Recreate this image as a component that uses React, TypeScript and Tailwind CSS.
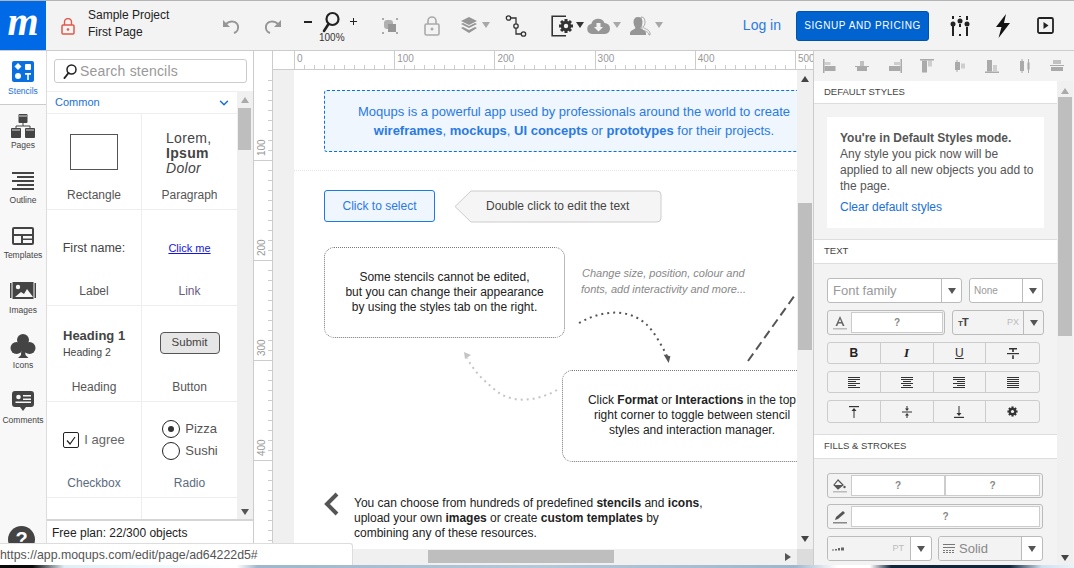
import { ReactNode } from "react";
import { ChevronDown } from "lucide-react";

const GREY = "#969696";
const DARK = "#3c3c3c";

function Caret({ color = "#8c8c8c", className = "" }: { color?: string; className?: string }) {
    return (
        <svg width="8" height="6" viewBox="0 0 8 6" className={className}>
            <path d="M0 0h8L4 6z" fill={color} />
        </svg>
    );
}

function Cog() {
    const teeth = [0, 45, 90, 135];
    return (
        <g>
            {teeth.map((a) => (
                <rect key={a} x="13.5" y="4" width="3" height="14" fill="#333" transform={`rotate(${a} 15 11)`} />
            ))}
            <circle cx="15" cy="11" r="5.2" fill="#333" />
            <circle cx="15" cy="11" r="2.2" fill="#f3f3f3" />
        </g>
    );
}

function HeaderIcons() {
    return (
        <div className="flex items-center h-full">
            {/* undo */}
            <svg width="20" height="20" viewBox="0 0 20 20" className="ml-[34px]" fill="none">
                <path d="M5 8c4-4 11-3 12 2 .6 3-1 6-4 7" stroke={GREY} strokeWidth="2" />
                <path d="M2 4v7h7z" fill={GREY} />
            </svg>
            {/* redo */}
            <svg width="20" height="20" viewBox="0 0 20 20" className="ml-[22px]" fill="none">
                <path d="M15 8c-4-4-11-3-12 2-.6 3 1 6 4 7" stroke={GREY} strokeWidth="2" />
                <path d="M18 4v7h-7z" fill={GREY} />
            </svg>
            {/* zoom */}
            <div className="relative ml-[21px] w-[60px] h-full">
                <span className="absolute left-0 top-[20px] w-[8px] h-[1.5px] bg-[#222]" />
                <svg width="20" height="24" viewBox="0 0 20 24" className="absolute left-[17px] top-[10px]" fill="none">
                    <circle cx="11.5" cy="8" r="6" stroke="#222" strokeWidth="2.2" />
                    <path d="M7.5 13 3 20" stroke="#222" strokeWidth="2.6" strokeLinecap="round" />
                </svg>
                <span className="absolute left-[46px] top-[20px] w-[7px] h-[1.2px] bg-[#222]" />
                <span className="absolute left-[49px] top-[17px] w-[1.2px] h-[7px] bg-[#222]" />
                <span className="absolute left-[15px] top-[31px] text-[10px] leading-[12px] text-[#333]">100%</span>
            </div>
            {/* group */}
            <svg width="18" height="18" viewBox="0 0 18 18" className="ml-[17px]">
                <path d="M1 1h2v2H1zM15 1h2v2h-2zM1 15h2v2H1zM15 15h2v2h-2z" fill="#aaa" />
                <rect x="3" y="3" width="9" height="9" rx="3" fill="#b0b0b0" />
                <rect x="7" y="7" width="8" height="8" fill={GREY} />
            </svg>
            {/* lock */}
            <svg width="16" height="20" viewBox="0 0 16 20" className="ml-[25px]" fill="none">
                <path d="M4 8V5a4 4 0 0 1 8 0v3" stroke="#aaa" strokeWidth="1.6" />
                <rect x="1" y="8" width="14" height="11" rx="1.5" stroke="#aaa" strokeWidth="1.6" />
                <circle cx="8" cy="13" r="1.5" fill="#aaa" />
            </svg>
            {/* layers */}
            <svg width="18" height="18" viewBox="0 0 18 18" className="ml-[20px]">
                <path d="M9 0l8 4-8 4-8-4z" fill={GREY} />
                <path d="M1 7l2-1 6 3 6-3 2 1-8 4zM1 11l2-1 6 3 6-3 2 1-8 5z" fill={GREY} />
            </svg>
            <Caret className="ml-[4px] -mt-[1px]" color="#a8a8a8" />
            {/* connector */}
            <svg width="22" height="24" viewBox="0 0 22 24" className="ml-[15px]" fill="none" stroke="#333" strokeWidth="1.3">
                <circle cx="3.5" cy="4" r="2.2" />
                <circle cx="11" cy="12" r="2.2" />
                <circle cx="18.5" cy="20" r="2.2" />
                <path d="M5.7 4H11v5.8M11 14.2V20h5.3" />
            </svg>
            {/* format */}
            <svg width="24" height="22" viewBox="0 0 24 22" className="ml-[24px]" fill="none">
                <path d="M15 1.2H1.2v19.6H15" stroke="#333" strokeWidth="1.6" />
                <Cog />
            </svg>
            <Caret className="ml-[1px] -mt-[1px]" color="#333" />
            {/* cloud */}
            <svg width="23" height="16" viewBox="0 0 23 16" className="ml-[3px]">
                <path d="M5 16a5 5 0 0 1-.7-9.9A7 7 0 0 1 17.5 5 5.5 5.5 0 0 1 17.5 16z" fill={GREY} />
                <path d="M9.5 5h4v4h2.5l-4.5 4.5L7 9h2.5z" fill="#f3f3f3" />
            </svg>
            <Caret className="ml-[3px] -mt-[1px]" color="#a8a8a8" />
            {/* users */}
            <svg width="21" height="20" viewBox="0 0 21 20" className="ml-[9px]">
                <path d="M11 1c3 0 4 2 4 5s-1 4-2 5c1 2 6 2 7 6v2h-1c0-3-4-4-7-5z" fill="none" stroke="#aaa" />
                <path d="M8 1c3 0 4.500 2 4.500 5S11 11 10.500 12c1 1.500 5 2 5.500 5v2H0v-2c.5-3 4.500-3.500 5.500-5C5 11 3.500 9 3.500 6S5 1 8 1z" fill={GREY} />
            </svg>
            <Caret className="ml-[4px] -mt-[1px]" color="#a8a8a8" />
        </div>
    );
}

function Header() {
    return (
        <header className="flex h-[50px] shrink-0 bg-[#f3f3f3] border-b border-[#cccccc]">
            <div className="w-[46px] h-full bg-[#006ae6] flex items-center justify-center text-white text-[40px] italic font-bold leading-none pb-[8px] font-['Liberation_Serif',serif]">
                m
            </div>
            <svg width="14" height="17" viewBox="0 0 14 17" className="ml-[15px] mt-[17px]" fill="none">
                <path d="M3.500 7V4a3.500 3.500 0 0 1 7 0v3" stroke="#e0594a" strokeWidth="1.400" />
                <rect x="1" y="7" width="12" height="9" rx="1" stroke="#e0594a" strokeWidth="1.500" />
                <circle cx="7" cy="11.500" r="1.300" fill="#e0594a" />
            </svg>
            <div className="ml-[13px] pt-[6px] text-[12px] leading-[17px] text-[#222] w-[99px]">
                <div>Sample Project</div>
                <div>First Page</div>
            </div>
            <div className="flex-1 min-w-0 h-[49px]">
                <HeaderIcons />
            </div>
            <span className="text-[14px] text-[#2a7ae2] self-center mr-[15px]">Log in</span>
            <div className="self-center w-[133px] h-[30px] rounded-[3px] bg-[#0063cf] border border-[#0052ab] flex items-center justify-center text-white text-[10px] tracking-[0.6px] font-medium">
                SIGNUP AND PRICING
            </div>
            {/* sliders */}
            <svg width="20" height="22" viewBox="0 0 20 22" className="ml-[21px] self-center" stroke="#222" strokeWidth="2" fill="#222">
                <path d="M3 1v3M3 11v10M10 1v1M10 9v3M10 19v2M17 1v4M17 12v9" fill="none" />
                <circle cx="3" cy="9" r="2.500" stroke="none" />
                <circle cx="10" cy="6" r="2.500" stroke="none" />
                <circle cx="17" cy="9" r="2.500" stroke="none" />
            </svg>
            <svg width="16" height="24" viewBox="0 0 16 24" className="ml-[25px] self-center">
                <path d="M11 0 1 13h5.500L3.500 24 15 9H9z" fill="#111" />
            </svg>
            <svg width="17" height="17" viewBox="0 0 17 17" className="ml-[26px] mr-[20px] self-center" fill="none">
                <rect x="1" y="1" width="15" height="15" rx="1.500" stroke="#222" strokeWidth="1.800" />
                <path d="M6.500 5v7l5-3.500z" fill="#222" />
            </svg>
        </header>
    );
}

function NavItem({ label, icon, active }: { label: string; icon: ReactNode; active?: boolean }) {
    return (
        <div
            className={
                active
                    ? "h-[54px] bg-white border-b border-[#ccc] flex flex-col items-center pt-[9px] text-[#1a6fd8]"
                    : "h-[55px] flex flex-col items-center pt-[9px] text-[#444]"
            }
        >
            <div className="h-[23px] flex items-center justify-center">{icon}</div>
            <span className="text-[8.5px] leading-[11px] mt-[3px] whitespace-nowrap">{label}</span>
        </div>
    );
}

function LeftNav() {
    const stroke = "#444";
    return (
        <nav className="w-[47px] shrink-0 bg-[#f8f8f8] border-r border-[#ddd] relative">
            <NavItem
                active
                label="Stencils"
                icon={
                    <svg width="22" height="21" viewBox="0 0 22 21">
                        <rect width="22" height="21" rx="2" fill="#0a6fe0" />
                        <path d="M6 2l3.500 3.500L6 9 2.500 5.500z" fill="#fff" />
                        <rect x="13" y="3" width="6" height="6" rx="1" fill="#fff" />
                        <circle cx="6" cy="15" r="3" fill="#fff" />
                        <path d="M13 12h6v1.800h-2.200V19h-1.600v-5.200H13z" fill="#fff" />
                    </svg>
                }
            />
            <NavItem
                label="Pages"
                icon={
                    <svg width="24" height="24" viewBox="0 0 24 24" fill={stroke}>
                        <rect x="7.500" y="0" width="9" height="9" rx="1" />
                        <rect x="0" y="14" width="10" height="10" rx="1" />
                        <rect x="14" y="14" width="10" height="10" rx="1" />
                        <path d="M12 9v3M5 14v-2h14v2" stroke={stroke} fill="none" />
                        <path d="M8 2h8M1 16h8M15 16h8" stroke="#ddd" />
                    </svg>
                }
            />
            <NavItem
                label="Outline"
                icon={
                    <svg width="22" height="18" viewBox="0 0 22 18" fill={stroke}>
                        <rect width="22" height="2" />
                        <rect x="5" y="4" width="17" height="2" />
                        <rect y="8" width="22" height="2" />
                        <rect x="5" y="12" width="17" height="2" />
                        <rect y="16" width="22" height="2" />
                    </svg>
                }
            />
            <NavItem
                label="Templates"
                icon={
                    <svg width="22" height="18" viewBox="0 0 22 18">
                        <rect width="22" height="18" rx="2" fill={stroke} />
                        <rect x="2" y="2" width="18" height="5" fill="#f8f8f8" />
                        <rect x="2" y="9" width="7" height="7" fill="#f8f8f8" />
                        <rect x="11" y="9" width="9" height="2.500" fill="#f8f8f8" />
                        <rect x="11" y="13" width="9" height="3" fill="#f8f8f8" />
                    </svg>
                }
            />
            <NavItem
                label="Images"
                icon={
                    <svg width="26" height="18" viewBox="0 0 26 18">
                        <rect x="0" y="1" width="1.500" height="15" fill={stroke} />
                        <rect x="24.500" y="1" width="1.500" height="15" fill={stroke} />
                        <rect x="2.500" y="0" width="21" height="17" fill={stroke} />
                        <circle cx="8" cy="5" r="2.200" fill="#f8f8f8" />
                        <path d="M5 15l6-5 3 2 3-5 6 8z" fill="#f8f8f8" />
                    </svg>
                }
            />
            <NavItem
                label="Icons"
                icon={
                    <svg width="26" height="26" viewBox="0 0 26 26" fill={stroke}>
                        <circle cx="13" cy="7" r="6" />
                        <circle cx="6.500" cy="15" r="6" />
                        <circle cx="19.500" cy="15" r="6" />
                        <path d="M11.500 12h3l1 10 3 3H8l3-3z" />
                    </svg>
                }
            />
            <NavItem
                label="Comments"
                icon={
                    <svg width="22" height="20" viewBox="0 0 22 20">
                        <path d="M3 0h16a3 3 0 0 1 3 3v10a3 3 0 0 1-3 3h-5l-3 4-3-4H3a3 3 0 0 1-3-3V3a3 3 0 0 1 3-3z" fill={stroke} />
                        <circle cx="6.500" cy="6" r="2.300" fill="#f8f8f8" />
                        <path d="M11 4h8v1.500h-8zM11 7.500h8V9h-8zM3.500 10.500h15.500V12H3.500z" fill="#f8f8f8" />
                    </svg>
                }
            />
            {/* help button, the browser status bubble covers its lower half */}
            <div className="absolute left-[8px] top-[475px] w-[27px] h-[27px] rounded-full bg-[#444] text-white text-[20px] font-bold leading-[27px] text-center">?</div>
        </nav>
    );
}

function Cell({ label, children, labelTone = "#555" }: { label: string; children: ReactNode; labelTone?: string }) {
    return (
        <div className="h-[96px] border-b border-[#eeeeee] flex flex-col items-center">
            <div className="h-[71px] w-full flex items-center justify-center pt-[5px]">{children}</div>
            <span className="text-[12px] leading-[14px] mt-[3px]" style={{ color: labelTone }}>
                {label}
            </span>
        </div>
    );
}

function StencilPanel() {
    return (
        <aside className="w-[207px] shrink-0 bg-white border-r border-[#ccc] flex flex-col relative">
            <div className="h-[40px] shrink-0 flex items-start pt-[8px] pl-[7px]">
                <div className="w-[193px] h-[24px] rounded-[3px] border border-[#ccc] flex items-center pl-[8px]">
                    <svg width="14" height="15" viewBox="0 0 14 15" fill="none">
                        <circle cx="8.500" cy="5.500" r="4.500" stroke="#222" strokeWidth="1.500" />
                        <path d="M5.500 9 1.500 14" stroke="#222" strokeWidth="2" strokeLinecap="round" />
                    </svg>
                    <span className="ml-[3px] text-[14px] text-[#999] tracking-[0.2px]">Search stencils</span>
                </div>
            </div>
            <div className="flex flex-1 min-h-0">
                <div className="w-[190px] shrink-0 overflow-hidden">
                    <div className="h-[23px] border-t border-b border-[#eeeeee] flex items-center justify-between pl-[8px] pr-[6px] text-[11px] text-[#1a6fd8]">
                        <span>Common</span>
                        <ChevronDown size={14} strokeWidth={2.5} color="#1a6fd8" />
                    </div>
                    <div className="grid grid-cols-[95px_95px]">
                        <div className="border-r border-[#eeeeee]">
                            <Cell label="Rectangle">
                                <div className="w-[48px] h-[36px] border border-[#555]" />
                            </Cell>
                            <Cell label="Label">
                                <span className="text-[12.5px] text-[#444]">First name:</span>
                            </Cell>
                            <Cell label="Heading">
                                <div className="w-[62px] text-[#444] whitespace-nowrap">
                                    <div className="text-[13px] font-bold leading-[16px]">Heading 1</div>
                                    <div className="text-[10.5px] leading-[16px]">Heading 2</div>
                                </div>
                            </Cell>
                            <Cell label="Checkbox" labelTone="#5b6b80">
                                <div className="flex items-center gap-[5px]">
                                    <div className="w-[16px] h-[16px] rounded-[2px] border border-[#222] flex items-center justify-center">
                                        <svg width="10" height="9" viewBox="0 0 10 9" fill="none">
                                            <path d="M1 4.500 4 8l5-7" stroke="#222" strokeWidth="1.200" />
                                        </svg>
                                    </div>
                                    <span className="text-[13px] text-[#666]">I agree</span>
                                </div>
                            </Cell>
                            <div className="h-[30px]" />
                        </div>
                        <div>
                            <Cell label="Paragraph">
                                <div className="w-[47px] mt-[2px] text-[14px] leading-[15px] text-[#444] tracking-[0.3px]">
                                    <div>Lorem,</div>
                                    <div className="font-bold">Ipsum</div>
                                    <div className="italic">Dolor</div>
                                </div>
                            </Cell>
                            <Cell label="Link" labelTone="#6c5a80">
                                <span className="text-[11px] text-[#1414e6] underline">Click me</span>
                            </Cell>
                            <Cell label="Button">
                                <div className="w-[60px] h-[22px] -mt-[2px] rounded-[4px] border border-[#555] bg-[#e6e6e6] text-[#444] text-[11.5px] leading-[19px] text-center">
                                    Submit
                                </div>
                            </Cell>
                            <Cell label="Radio" labelTone="#5b6b80">
                                <div className="text-[13px] text-[#555] ml-[1px]">
                                    <div className="flex items-center gap-[5px] h-[22px]">
                                        <span className="w-[18px] h-[18px] rounded-full border border-[#222] flex items-center justify-center">
                                            <span className="w-[6px] h-[6px] rounded-full bg-[#333]" />
                                        </span>
                                        Pizza
                                    </div>
                                    <div className="flex items-center gap-[5px] h-[22px]">
                                        <span className="w-[18px] h-[18px] rounded-full border border-[#222]" />
                                        Sushi
                                    </div>
                                </div>
                            </Cell>
                            <div className="h-[30px] flex justify-center items-end">
                                <div className="w-[60px] h-[1px] bg-[#777]" />
                            </div>
                        </div>
                    </div>
                </div>
                <div className="w-[16px] bg-[#f0f0f0] flex flex-col items-center justify-between pt-[6px] pb-[5px] h-[429px] relative">
                    <Caret color="#aaa" className="rotate-180" />
                    <div className="absolute left-[1px] top-[17px] w-[13px] h-[42px] bg-[#bebebe]" />
                    <Caret color="#555" />
                </div>
            </div>
            <div className="absolute left-0 top-[468px] w-full h-[46px] bg-white border-t-2 border-[#d5d5d5] pl-[5px] pt-[5px] text-[12px] leading-[14px] text-[#222]">
                Free plan: 22/300 objects
                <div className="absolute left-[132px] top-[22px] w-[53px] h-[20px] rounded-t-[3px] bg-[#0056b3]" />
            </div>
        </aside>
    );
}

function Rulers() {
    const hTicks = Array.from({ length: 52 }, (_, i) => i);
    const vTicks = Array.from({ length: 48 }, (_, i) => i);
    return (
        <>
            {/* horizontal ruler */}
            <svg width="559" height="19" className="absolute left-0 top-0 bg-white">
                <rect x="0" y="18" width="559" height="1" fill="#ccc" />
                <rect x="18" y="0" width="1" height="19" fill="#ccc" />
                {hTicks.map((i) => {
                    const x = 40 + i * 10.02;
                    const major = i % 10 === 0;
                    return <rect key={i} x={Math.round(x)} y={major ? 0 : 14} width="1" height={major ? 18 : 4} fill="#ccc" />;
                })}
                {[0, 100, 200, 300, 400, 500].map((n, i) => (
                    <text key={n} x={43 + i * 100.2} y="11" fontSize="10" fill="#999" fontFamily="Liberation Sans">
                        {n}
                    </text>
                ))}
            </svg>
            {/* vertical ruler */}
            <svg width="19" height="480" className="absolute left-0 top-[18px] bg-white">
                <rect x="18" y="0" width="1" height="480" fill="#ccc" />
                {vTicks.map((i) => {
                    const y = 11 + i * 10;
                    const major = i % 10 === 8;
                    return <rect key={i} x={major ? 0 : 14} y={y} width={major ? 18 : 4} height="1" fill="#ccc" />;
                })}
                {[100, 200, 300, 400].map((n, i) => (
                    <text key={n} x="0" y="0" fontSize="10" fill="#999" fontFamily="Liberation Sans" transform={`translate(11 ${87 + i * 100}) rotate(-90)`}>
                        {n}
                    </text>
                ))}
            </svg>
        </>
    );
}

function Canvas() {
    return (
        <main className="w-[543px] h-[498px] shrink-0 relative overflow-hidden bg-white">
            <div className="absolute left-[19px] top-[19px] w-[21px] h-[480px] bg-[#f0f0f0]" />

            <div className="absolute left-[70px] top-[39px] w-[500px] h-[62px] rounded-[3px] border border-dashed border-[#0a6fe0] bg-[#eff6fe] pt-[11px] text-center text-[13px] leading-[19px] text-[#2a7ae2]">
                <div>Moqups is a powerful app used by professionals around the world to create</div>
                <div>
                    <b>wireframes</b>, <b>mockups</b>, <b>UI concepts</b> or <b>prototypes</b> for their projects.
                </div>
            </div>
            <div className="absolute left-[40px] top-[119px] w-[503px] border-t border-dotted border-[#e5e5e5]" />

            <div className="absolute left-[70px] top-[139px] w-[111px] h-[32px] rounded-[3px] border border-[#1a7ae6] bg-[#eff6fe] text-[12px] leading-[30px] text-center text-[#2a7ae2]">
                Click to select
            </div>
            <svg width="208" height="33" viewBox="0 0 208 33" className="absolute left-[200px] top-[139px]">
                <path d="M1 16.500 17 1h186a4 4 0 0 1 4 4v23a4 4 0 0 1-4 4H17z" fill="#f5f5f5" stroke="#ccc" />
            </svg>
            <span className="absolute left-[232px] top-[148px] text-[12px] leading-[14px] text-[#444]">Double click to edit the text</span>

            <div className="absolute left-[70px] top-[196px] w-[241px] h-[91px] rounded-[10px] border border-dotted border-[#777] pt-[22px] text-center text-[12px] leading-[15px] text-[#222]">
                <div>Some stencils cannot be edited,</div>
                <div>but you can change their appearance</div>
                <div>by using the styles tab on the right.</div>
            </div>

            <div className="absolute left-[327px] top-[214px] w-[170px] text-[11px] leading-[16px] italic text-[#888]">
                <div className="pl-[1px]">Change size, position, colour and</div>
                <div>fonts, add interactivity and more...</div>
            </div>

            <svg width="543" height="515" className="absolute left-0 top-0">
                <path d="M325 272C350 258 375 258 392 273 C400 280 408 295 414 307" fill="none" stroke="#555" strokeWidth="2" strokeDasharray="2 4" />
                <path d="M409 304l7 0.500-0.500 7z" fill="#555" transform="rotate(10 412 307)" />
                <path d="M494 310 541 244" fill="none" stroke="#555" strokeWidth="2" strokeDasharray="9 5" />
                <path d="M303 339C280 352 255 352 240 338 C228 328 220 320 213 307" fill="none" stroke="#c4c4c4" strokeWidth="2" strokeDasharray="2 4" />
                <path d="M210 301l7 3-6 4z" fill="#c4c4c4" />
                <path d="M83 443l-10 10 10 10" fill="none" stroke="#555" strokeWidth="4" />
            </svg>

            <div className="absolute left-[308px] top-[319px] w-[300px] h-[92px] rounded-[10px] border border-dotted border-[#777] pt-[22px] text-[12px] leading-[15px] text-[#222]">
                <div className="w-[258px] text-center">
                    <div className="whitespace-nowrap">
                        Click <b>Format</b> or <b>Interactions</b> in the top
                    </div>
                    <div>right corner to toggle between stencil</div>
                    <div>styles and interaction manager.</div>
                </div>
            </div>

            <div className="absolute left-[100px] top-[445px] w-[380px] text-[12px] leading-[15px] text-[#222]">
                <div>
                    You can choose from hundreds of predefined <b>stencils</b> and <b>icons</b>,
                </div>
                <div>
                    upload your own <b>images</b> or create <b>custom templates</b> by
                </div>
                <div>combining any of these resources.</div>
            </div>
        </main>
    );
}

function CanvasScrollbars() {
    return (
        <>
            <div className="absolute left-[254px] top-[498px] w-[543px] h-[16px] bg-[#f0f0f0]">
                <div className="absolute left-[174px] top-[1px] w-[186px] h-[13px] bg-[#bebebe]" />
                <Caret color="#555" className="absolute left-[530px] top-[5px] -rotate-90" />
            </div>
            <div className="absolute left-[797px] top-[498px] w-[16px] h-[16px] bg-[#dcdcdc]" />
        </>
    );
}

function VScroll() {
    return (
        <div className="w-[16px] shrink-0 h-[498px] bg-[#f0f0f0] flex flex-col items-center justify-between pt-[25px] pb-[7px] relative">
            <Caret color="#444" className="rotate-180" />
            <div className="absolute left-[1px] top-[152px] w-[14px] h-[147px] bg-[#bebebe]" />
            <Caret color="#444" />
        </div>
    );
}

function SectionTitle({ children, tall }: { children: ReactNode; tall?: boolean }) {
    return (
        <div className={`bg-white border-b border-[#ddd] pl-[10px] text-[9.5px] text-[#444] flex items-center shrink-0 ${tall ? "h-[23px]" : "h-[24px]"}`}>
            {children}
        </div>
    );
}

function Dropdown({ w, divider, children }: { w: number; divider: number; children: ReactNode }) {
    return (
        <div className="h-[25px] rounded-[3px] border border-[#bbb] bg-white flex items-stretch overflow-hidden" style={{ width: w }}>
            <div className="flex-1 min-w-0 flex items-center">{children}</div>
            <div className="border-l border-[#bbb] flex items-center justify-center" style={{ width: divider }}>
                <Caret color="#555" />
            </div>
        </div>
    );
}

function Swatch({ icon, w, fields }: { icon: ReactNode; w: number; fields: number[] }) {
    return (
        <div className="h-[25px] rounded-[3px] border border-[#bbb] bg-[#f3f3f3] flex items-center" style={{ width: w }}>
            <div className="w-[23px] flex justify-center">{icon}</div>
            {fields.map((fw, i) => (
                <div key={i} className="h-[21px] bg-white border border-[#ccc] text-center text-[10px] leading-[19px] text-[#888] font-bold" style={{ width: fw }}>
                    ?
                </div>
            ))}
        </div>
    );
}

function BtnRow({ items, h }: { items: ReactNode[]; h: string }) {
    return (
        <div className={`grid grid-cols-4 w-[213px] rounded-[3px] border border-[#ccc] ${h}`}>
            {items.map((it, i) => (
                <div key={i} className={`flex items-center justify-center ${i < 3 ? "border-r border-[#ccc]" : ""}`}>
                    {it}
                </div>
            ))}
        </div>
    );
}

function AlignLines({ mode }: { mode: "left" | "center" | "right" | "full" }) {
    const short = mode === "left" ? "M0 4.500h8M0 8.500h8" : mode === "right" ? "M4 4.500h8M4 8.500h8" : mode === "center" ? "M2 4.500h8M2 8.500h8" : "M0 4.500h12M0 8.500h12";
    return (
        <svg width="12" height="11" viewBox="0 0 12 11" fill="none" stroke="#333" strokeWidth="1.200">
            <path d={`M0 .5h12M0 2.500h12M0 6.500h12M0 10.500h12${short}`} />
        </svg>
    );
}

function RightToolbarIcons() {
    const c = "#aaaaaa";
    return (
        <div className="h-[30px] shrink-0 flex items-center justify-between pl-[9px] pr-[10px]">
            <svg width="14" height="14" viewBox="0 0 14 14" fill={c}><rect width="1.500" height="14" /><rect x="1.500" y="7" width="11" height="5" /><rect x="1.500" y="3" width="6" height="3" opacity="0.500" /></svg>
            <svg width="14" height="14" viewBox="0 0 14 14" fill={c}><rect y="7" width="14" height="1" /><rect x="2" y="8" width="10" height="4" /><rect x="5" y="2" width="4" height="5" opacity="0.700" /></svg>
            <svg width="14" height="14" viewBox="0 0 14 14" fill={c}><rect x="12.500" width="1.500" height="14" /><rect x="1" y="7" width="11.500" height="5" /><rect x="6" y="3" width="6" height="3" opacity="0.500" /></svg>
            <svg width="14" height="14" viewBox="0 0 14 14" fill={c}><rect width="14" height="1.500" /><rect x="2" y="1.500" width="5" height="12" /><rect x="8" y="1.500" width="4" height="6" opacity="0.500" /></svg>
            <svg width="14" height="14" viewBox="0 0 14 14" fill={c}><rect x="2" y="3" width="5" height="8" /><rect x="3.500" y="1" width="1" height="12" /><rect x="8" y="4.500" width="4" height="5" opacity="0.500" /></svg>
            <svg width="14" height="14" viewBox="0 0 14 14" fill={c}><rect y="12.500" width="14" height="1.500" /><rect x="2" y="1" width="5" height="11.500" /><rect x="8" y="6" width="4" height="6" opacity="0.500" /></svg>
            <svg width="14" height="14" viewBox="0 0 14 14" fill={c}><rect x="2" y="2" width="4" height="10" /><rect x="9" y="3.500" width="3" height="7" opacity="0.600" /><rect x="3.500" y="0" width="1" height="14" /><rect x="10" y="0" width="1" height="14" /></svg>
            <svg width="14" height="14" viewBox="0 0 14 14" fill={c}><rect x="3" y="1" width="8" height="4" opacity="0.700" /><rect x="1" y="8" width="12" height="4" /><rect y="6" width="14" height="1" /></svg>
        </div>
    );
}

function RightPanel() {
    return (
        <aside className="w-[261px] shrink-0 bg-[#f3f3f3] border-l border-[#ccc] flex flex-col">
            <RightToolbarIcons />
            <div className="flex flex-1 min-h-0">
                <div className="w-[243px] shrink-0 flex flex-col overflow-hidden">
                    <SectionTitle tall>DEFAULT STYLES</SectionTitle>
                    <div className="h-[136px] shrink-0 px-[13px] pt-[13px] border-b border-[#ddd]">
                        <div className="bg-white h-[111px] pl-[13px] pt-[13px] text-[12px] leading-[16px] text-[#555]">
                            <div className="font-bold">You're in Default Styles mode.</div>
                            <div>Any style you pick now will be</div>
                            <div>applied to all new objects you add to</div>
                            <div>the page.</div>
                            <div className="mt-[5px] text-[#1a6fd8]">Clear default styles</div>
                        </div>
                    </div>
                    <SectionTitle>TEXT</SectionTitle>
                    <div className="h-[171px] shrink-0 border-b border-[#ddd] pl-[13px] pt-[14px] flex flex-col">
                        <div className="flex gap-[7px]">
                            <Dropdown w={135} divider={20}>
                                <span className="pl-[5px] text-[13px] text-[#999]">Font family</span>
                            </Dropdown>
                            <Dropdown w={74} divider={20}>
                                <span className="pl-[4px] text-[10px] text-[#999]">None</span>
                            </Dropdown>
                        </div>
                        <div className="flex gap-[7px] mt-[7px]">
                            <Swatch
                                w={118}
                                fields={[92]}
                                icon={
                                    <svg width="14" height="14" viewBox="0 0 14 14">
                                        <path d="M7 0 2.500 10H4.300l1-2.500h3.400l1 2.500h1.800zM5.800 6 7 3l1.200 3z" fill="#666" />
                                        <rect y="12" width="14" height="1.500" fill="#bbb" />
                                    </svg>
                                }
                            />
                            <div className="w-[92px] h-[25px] rounded-[3px] border border-[#bbb] bg-[#f3f3f3] flex items-stretch">
                                <div className="flex-1 flex items-center justify-between pl-[5px] pr-[2px]">
                                    <span className="text-[#444] text-[11px] font-bold leading-none tracking-[-1px]">
                                        <span className="text-[8px]">T</span>T
                                    </span>
                                    <span className="text-[9px] text-[#bbb]">PX</span>
                                </div>
                                <div className="w-[20px] ml-[2px] border-l border-[#bbb] flex items-center justify-center">
                                    <Caret color="#555" />
                                </div>
                            </div>
                        </div>
                        <div className="mt-[7px]">
                            <BtnRow
                                h="h-[22px]"
                                items={[
                                    <b key="b" className="text-[12px] text-[#222]">B</b>,
                                    <b key="i" className="text-[13px] text-[#222] italic font-['Liberation_Serif',serif]">I</b>,
                                    <b key="u" className="text-[12px] text-[#333] underline font-normal">U</b>,
                                    <svg key="s" width="12" height="11" viewBox="0 0 12 11" fill="#333">
                                        <rect y="5" width="12" height="1.200" />
                                        <path d="M2 0h8v1.500H6.800V4H5.200V1.500H2zM5.200 7.200h1.600V11H5.200z" />
                                    </svg>,
                                ]}
                            />
                        </div>
                        <div className="mt-[7px]">
                            <BtnRow
                                h="h-[22px]"
                                items={[
                                    <AlignLines key="l" mode="left" />,
                                    <AlignLines key="c" mode="center" />,
                                    <AlignLines key="r" mode="right" />,
                                    <AlignLines key="f" mode="full" />,
                                ]}
                            />
                        </div>
                        <div className="mt-[7px]">
                            <BtnRow
                                h="h-[23px]"
                                items={[
                                    <svg key="t" width="10" height="12" viewBox="0 0 10 12" fill="#333"><rect width="10" height="1.200" /><path d="M5 2 2.500 5h2v7h1V5h2z" /></svg>,
                                    <svg key="m" width="10" height="14" viewBox="0 0 10 14" fill="#333"><rect y="6.500" width="10" height="1" /><path d="M5 6 3 3.500h1.500V1h1v2.500H7zM5 8l2 2.500H5.500V13h-1v-2.500H3z" /></svg>,
                                    <svg key="b2" width="10" height="12" viewBox="0 0 10 12" fill="#333"><rect y="10.800" width="10" height="1.200" /><path d="M5 10 7.500 7h-2V0h-1v7h-2z" /></svg>,
                                    <svg key="s" width="13" height="13" viewBox="6 2 18 18"><Cog /></svg>,
                                ]}
                            />
                        </div>
                    </div>
                    <SectionTitle>FILLS &amp; STROKES</SectionTitle>
                    <div className="pl-[13px] pt-[14px] flex flex-col gap-[6px]">
                        <Swatch
                            w={216}
                            fields={[94, 95]}
                            icon={
                                <svg width="14" height="14" viewBox="0 0 14 14">
                                    <path d="M5 1 1 6l4 4 5-4z" fill="none" stroke="#555" strokeWidth="1.200" />
                                    <path d="M1.500 6h8L5 10z" fill="#555" />
                                    <rect y="12" width="14" height="1.500" fill="#bbb" />
                                    <circle cx="11.500" cy="8" r="1.200" fill="#555" />
                                </svg>
                            }
                        />
                        <Swatch
                            w={216}
                            fields={[189]}
                            icon={
                                <svg width="14" height="14" viewBox="0 0 14 14">
                                    <path d="M10 1l2 2-7 6-3 1 1-3z" fill="#555" />
                                    <rect y="12" width="14" height="1.500" fill="#888" />
                                </svg>
                            }
                        />
                        <div className="flex gap-[6px] mt-[1px]">
                            <Dropdown w={105} divider={21}>
                                <div className="flex-1 h-full bg-[#f3f3f3] flex items-center justify-between pl-[4px] pr-[6px]">
                                    <svg width="12" height="4" viewBox="0 0 12 4" fill="#666">
                                        <rect y="2.500" width="2" height="1" />
                                        <rect x="3" y="2" width="2" height="1.500" />
                                        <rect x="6" y="1" width="2" height="2.500" />
                                        <rect x="9" y="0.500" width="3" height="3" />
                                    </svg>
                                    <span className="text-[9px] text-[#bbb]">PT</span>
                                </div>
                            </Dropdown>
                            <Dropdown w={105} divider={21}>
                                <div className="flex-1 h-full bg-[#f3f3f3] flex items-center pl-[4px]">
                                    <svg width="12" height="9" viewBox="0 0 12 9" stroke="#777" fill="none">
                                        <path d="M0 .5h12M0 3.500h12" />
                                        <path d="M0 6.500h12M0 8.500h12" strokeDasharray="2 1" />
                                    </svg>
                                    <span className="ml-[4px] text-[13px] text-[#888]">Solid</span>
                                </div>
                            </Dropdown>
                        </div>
                    </div>
                </div>
                <div className="w-[16px] shrink-0 bg-[#f0f0f0] flex flex-col items-center justify-between pt-[7px] pb-[4px] relative">
                    <Caret color="#aaa" className="rotate-180" />
                    <div className="absolute left-[1px] top-[16px] w-[14px] h-[239px] bg-[#bebebe]" />
                    <Caret color="#444" />
                </div>
            </div>
        </aside>
    );
}

export default function App() {
    return (
        <div className="relative w-[1074px] h-[568px] overflow-hidden bg-white font-['Liberation_Sans',Arial,sans-serif]" style={{ color: DARK }}>
            <div className="h-[1px] bg-[#b4b4b4]" />
            <Header />
            <div className="flex h-[514px] relative">
                <LeftNav />
                <StencilPanel />
                <div className="relative flex w-[559px] shrink-0 items-start">
                    <Canvas />
                    <VScroll />
                    <Rulers />
                </div>
                <RightPanel />
                <CanvasScrollbars />
            </div>
            {/* browser status bubble */}
            <div className="absolute left-0 top-[543px] w-[353px] h-[22px] bg-white border-t border-r border-[#ddd] rounded-tr-[3px] text-[12.33px] leading-[23px] text-[#555]">
                https://app.moqups.com/edit/page/ad64222d5#
            </div>
            {/* desktop wallpaper peeking through */}
            <div className="absolute left-0 top-[565px] w-full h-[3px] bg-[linear-gradient(90deg,#0a0a0a_0%,#0a0a0a_3%,#dfeef6_6%,#f0fbff_16%,#ffffff_22%,#9fb6cc_24%,#b5c8d8_50%,#9fb6cc_74%,#ffffff_78%,#ffffff_81%,#10243a_83%,#10243a_94%,#cfe0ee_97%,#e8f4fb_100%)]" />
        </div>
    );
}
